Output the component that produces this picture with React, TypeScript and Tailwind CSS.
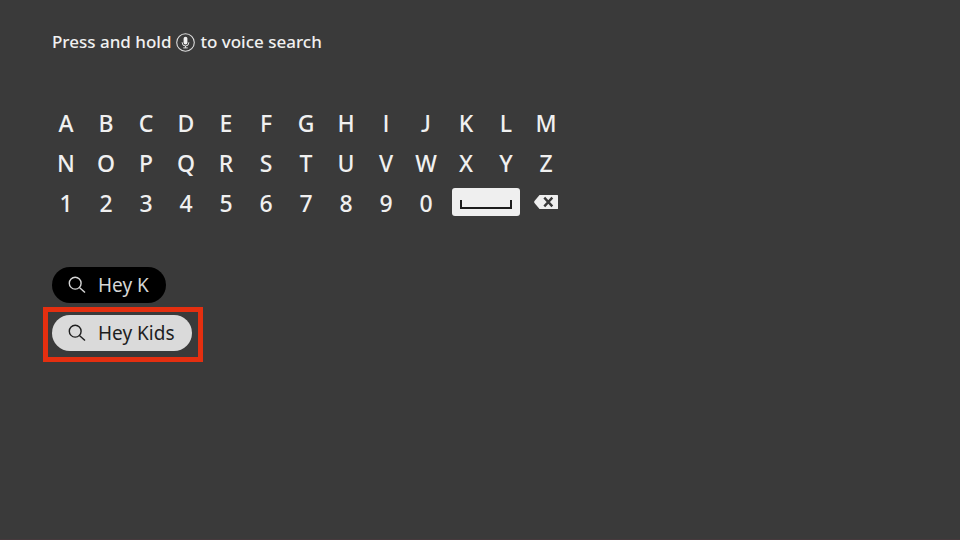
import clsx from "clsx";
import { useState } from "react";

const keyRows = ["ABCDEFGHIJKLM", "NOPQRSTUVWXYZ", "1234567890"];

function MicIcon() {
  return (
    <svg className="h-[19px] w-[19px]" viewBox="0 0 19 19" fill="none" role="img" aria-label="microphone">
      <circle cx="9.5" cy="9.5" r="8.8" stroke="#dcdcdc" strokeWidth="1.1" />
      <rect x="7.6" y="3.8" width="3.8" height="7.6" rx="1.9" fill="#f0f0f0" />
      <path d="M6.2 9.2v.5a3.3 3.3 0 0 0 6.6 0v-.5M9.5 13v1.8M7.3 14.9h4.4" stroke="#e4e4e4" />
    </svg>
  );
}

function SearchIcon() {
  return (
    <svg className="h-[18px] w-[18px]" viewBox="0 0 18 18" fill="none" stroke="currentColor" strokeWidth="1.4" aria-hidden="true">
      <circle cx="7.2" cy="7.2" r="5.9" />
      <path d="M11.4 11.4 17 16.6" />
    </svg>
  );
}

function SpaceIcon() {
  return (
    <svg className="h-[10px] w-[52px]" viewBox="0 0 52 10" fill="none" stroke="#1c1c1c" strokeWidth="2" aria-hidden="true">
      <path d="M1 0v8h50V0" />
    </svg>
  );
}

function BackspaceIcon() {
  return (
    <svg className="h-[14px] w-[24px]" viewBox="0 0 24 14" aria-hidden="true">
      <path d="M5.5 0H23.5a.5.5 0 0 1 .5.5v13a.5.5 0 0 1-.5.5H5.5L.5 8Q-.2 7 .5 6Z" fill="#efefef" />
      <path d="m10.3 2.6 8 8.8M18.3 2.6l-8 8.8" stroke="#3a3a3a" strokeWidth="2.4" />
    </svg>
  );
}

export default function App() {
  const [query, setQuery] = useState("Hey K");

  return (
    <main className="min-h-screen border-b border-[#46393c] bg-[#3a3a3a] px-[52px] pt-[30px] font-['Noto_Sans',sans-serif] text-[#f0f0f0]">
      <p className="flex h-6 items-center gap-[5px] text-[17px] font-medium">
        <span>Press and hold</span>
        <MicIcon />
        <span>to voice search</span>
      </p>

      <div className="mt-[54px] grid w-fit grid-cols-[repeat(13,28px)] gap-3">
        {keyRows.join("").split("").map((key) => (
          <button
            key={key}
            type="button"
            className={clsx(
              "flex h-7 items-center justify-center pt-0.5 text-[23px] leading-7 font-medium",
              (key === "I" || key === "J") && "font-['Lato',sans-serif]",
            )}
            onClick={() => setQuery(query + key)}
          >
            {key}
          </button>
        ))}
        <button
          type="button"
          aria-label="Space"
          className="col-span-2 flex h-7 items-end justify-center rounded-[3px] bg-[#efefef] pb-[6px]"
          onClick={() => setQuery(query + " ")}
        >
          <SpaceIcon />
        </button>
        <button
          type="button"
          aria-label="Backspace"
          className="flex h-7 items-center justify-center"
          onClick={() => setQuery(query.slice(0, -1))}
        >
          <BackspaceIcon />
        </button>
      </div>

      <div className="mt-[51px] flex flex-col items-start gap-3">
        <button
          type="button"
          className="flex h-9 items-center gap-3 rounded-full bg-black pr-[17px] pl-4 text-[19px] text-[#d6d6d6]"
        >
          <SearchIcon />
          <span>{query}</span>
        </button>
        <div className="relative">
          <button
            type="button"
            className="flex h-9 items-center gap-3 rounded-full bg-[#dadada] pr-[17px] pl-4 text-[19px] text-[#1e1e1e]"
            onClick={() => setQuery("Hey Kids")}
          >
            <SearchIcon />
            <span>Hey Kids</span>
          </button>
          <div className="pointer-events-none absolute -top-2 -right-[11px] -bottom-[11px] -left-[9px] border-5 border-[#e42f10]" />
        </div>
      </div>
    </main>
  );
}
